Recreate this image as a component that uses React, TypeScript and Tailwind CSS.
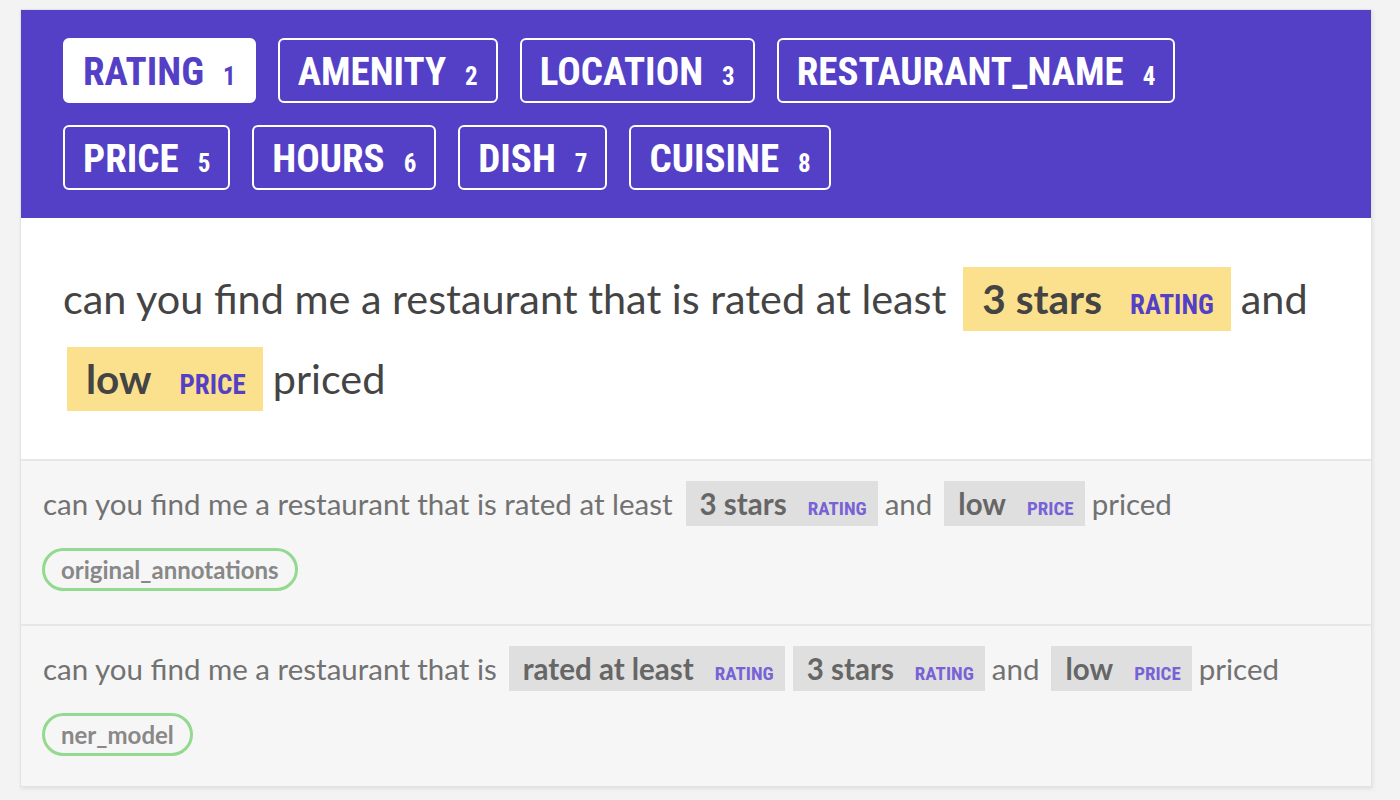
const labels = [
  "RATING",
  "AMENITY",
  "LOCATION",
  "RESTAURANT_NAME",
  "PRICE",
  "HOURS",
  "DISH",
  "CUISINE",
];

function LabelButton({ label, n, active }: { label: string; n: number; active: boolean }) {
  return (
    <div
      className={
        active
          ? "h-[65px] rounded-[6px] border-2 border-white bg-white px-[18px] pt-[3px] leading-[58px] text-[#5440c6] font-['Roboto_Condensed',sans-serif] font-bold text-[39px] whitespace-nowrap"
          : "h-[65px] rounded-[6px] border-2 border-white px-[18px] pt-[3px] leading-[58px] text-white font-['Roboto_Condensed',sans-serif] font-bold text-[39px] whitespace-nowrap"
      }
    >
      {label}
      <span className="ml-[19px] text-[25px] leading-none">{n}</span>
    </div>
  );
}

function BigMark({ text, label, className }: { text: string; label: string; className: string }) {
  return (
    <span className={"inline-block bg-[#fbe18e] pl-[19px] pr-[17px] text-[40.5px] leading-[64px] font-bold text-[#444] " + className}>
      {text}
      <span className="ml-[28px] font-['Roboto_Condensed',sans-serif] text-[27px] font-bold leading-none text-[#5440c6]">
        {label}
      </span>
    </span>
  );
}

function SmallMark({ text, label, className }: { text: string; label: string; className: string }) {
  return (
    <span className={"inline-block bg-[#dfdfdf] pl-[14px] pr-[11px] leading-[45px] font-bold text-[#666] " + className}>
      {text}
      <span className="ml-[21px] font-['Roboto_Condensed',sans-serif] text-[19px] font-bold leading-none text-[#7762d6]">
        {label}
      </span>
    </span>
  );
}

function Pill({ children }: { children: string }) {
  return (
    <div className="mt-[22px] -ml-[1px] inline-flex h-[43px] items-center rounded-full border-[3px] border-[#93d98f] px-[16px] text-[24px] font-bold text-[#888]">
      {children}
    </div>
  );
}

export default function App() {
  return (
    <div className="min-h-screen bg-[#f3f3f3] pt-[9px] pl-[20px] font-['Lato',sans-serif]">
      <div className="w-[1352px] border border-[#e2e2e2] bg-white shadow-[1px_2px_4px_rgba(0,0,0,0.08)]">
        <div className="flex flex-wrap gap-x-[22px] gap-y-[22px] bg-[#5440c6] px-[42px] pt-[28px] pb-[28px]">
          {labels.map((l, i) => (
            <LabelButton key={l} label={l} n={i + 1} active={i === 0} />
          ))}
        </div>
        <div className="bg-white px-[42px] pt-[40px] pb-[41px]">
          <p className="text-[41.4px] leading-[80px] text-[#444]">
            can you find me a restaurant that is rated at least
            <BigMark text="3 stars" label="RATING" className="ml-[17px] mr-[10px]" />
            and <BigMark text="low" label="PRICE" className="ml-[4px] mr-[10px]" />
            priced
          </p>
        </div>
        <div className="border-t-2 border-[#e6e6e6] bg-[#f6f6f6] px-[22px] pt-[20px] pb-[33px]">
          <div className="text-[29.5px] leading-[45px] text-[#727272]">
            can you find me a restaurant that is rated at least
            <SmallMark text="3 stars" label="RATING" className="ml-[13px] mr-[7px]" />
            and
            <SmallMark text="low" label="PRICE" className="ml-[12px] mr-[7px]" />
            priced
          </div>
          <Pill>original_annotations</Pill>
        </div>
        <div className="border-t-2 border-[#e6e6e6] bg-[#f6f6f6] px-[22px] pt-[20px] pb-[30px]">
          <div className="text-[29.5px] leading-[45px] text-[#727272]">
            can you find me a restaurant that is
            <SmallMark text="rated at least" label="RATING" className="ml-[12px] mr-[8px]" />
            <SmallMark text="3 stars" label="RATING" className="mr-[7px]" />
            and
            <SmallMark text="low" label="PRICE" className="ml-[12px] mr-[7px]" />
            priced
          </div>
          <Pill>ner_model</Pill>
        </div>
      </div>
    </div>
  );
}
